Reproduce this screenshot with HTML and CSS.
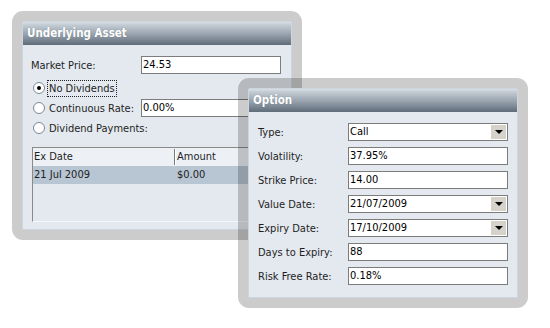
FILE: index.html
```html
<!DOCTYPE html>
<html>
<head>
<meta charset="utf-8">
<link rel="stylesheet" href="styles.css">
</head>
<body>
<div class="desk">
  <section class="frame frame-asset">
    <div class="panel panel-asset">
      <header class="panel-head">Underlying Asset</header>
      <div class="panel-body asset-body">
        <div class="row">
          <span class="lbl lbl-wide">Market Price:</span>
          <div class="field field-wide">24.53</div>
        </div>
        <div class="radio-row">
          <span class="radio checked"></span>
          <span class="focus">No Dividends</span>
        </div>
        <div class="radio-row">
          <span class="radio"></span>
          <span class="rlbl">Continuous Rate:</span>
          <div class="field field-wide">0.00%</div>
        </div>
        <div class="radio-row">
          <span class="radio"></span>
          <span class="rtext">Dividend Payments:</span>
        </div>
        <div class="grid">
          <div class="grid-head">
            <span class="col col-date">Ex Date</span>
            <span class="col col-amt">Amount</span>
          </div>
          <div class="grid-row selected">
            <span class="col col-date">21 Jul 2009</span>
            <span class="col col-amt">$0.00</span>
          </div>
        </div>
      </div>
    </div>
  </section>

  <section class="frame frame-option">
    <div class="panel panel-option">
      <header class="panel-head">Option</header>
      <div class="panel-body option-body">
        <div class="row"><span class="lbl">Type:</span><div class="field combo"><span class="val">Call</span><span class="drop"></span></div></div>
        <div class="row"><span class="lbl">Volatility:</span><div class="field">37.95%</div></div>
        <div class="row"><span class="lbl">Strike Price:</span><div class="field">14.00</div></div>
        <div class="row"><span class="lbl">Value Date:</span><div class="field combo"><span class="val">21/07/2009</span><span class="drop"></span></div></div>
        <div class="row"><span class="lbl">Expiry Date:</span><div class="field combo"><span class="val">17/10/2009</span><span class="drop"></span></div></div>
        <div class="row"><span class="lbl">Days to Expiry:</span><div class="field">88</div></div>
        <div class="row"><span class="lbl">Risk Free Rate:</span><div class="field">0.18%</div></div>
      </div>
    </div>
  </section>
</div>
</body>
</html>
```

FILE: styles.css
```css
* { box-sizing: border-box; }
html, body { margin: 0; padding: 0; background: #fff; }
body {
  font-family: "DejaVu Sans Condensed", "DejaVu Sans", sans-serif;
  font-stretch: semi-condensed;
  font-size: 11px;
  color: #1e1e1e;
}
.desk {
  position: relative;
  width: 550px;
  height: 328px;
  overflow: hidden;
  background: #fff;
}
.frame {
  position: absolute;
  padding: 10px;
  background: rgba(0, 0, 0, 0.2);
  border-radius: 11px;
}
.frame-asset { left: 12px; top: 11px; }
.frame-option { left: 238px; top: 78px; }

.panel {
  width: 270px;
  background: #e4e9ef;
  border: 1px solid #cdd6df;
  border-radius: 2px 2px 0 0;
  overflow: hidden;
}
.panel-asset { height: 209px; }
.panel-option { height: 210px; }

.panel-head {
  margin: -1px -1px 0;
  height: 24px;
  line-height: 24px;
  padding-left: 5px;
  font-family: "DejaVu Sans Condensed", "DejaVu Sans", sans-serif;
  font-weight: bold;
  font-size: 11.5px;
  color: #fff;
  text-shadow: 0 0 1px rgba(60, 70, 80, 0.4);
  background: linear-gradient(#dfe5ea 0%, #c5cdd5 15%, #98a3ae 55%, #5f6c79 100%);
  border-radius: 2px 2px 0 0;
}

.panel-body { display: flex; flex-direction: column; }
.asset-body { padding: 11px 10px 0 8px; }
.option-body { padding: 11px 9px 0 9px; gap: 6px; }

.row { display: flex; align-items: center; height: 18px; }
.lbl { width: 90px; flex: none; }
.lbl-wide { width: 110px; }

.field {
  width: 160px;
  height: 18px;
  flex: none;
  background: #fff;
  border: 1px solid #7c7c7c;
  color: #000;
  line-height: 16px;
  padding-left: 1px;
  white-space: nowrap;
  overflow: hidden;
}
.field-wide { width: 140px; }
.combo { display: flex; align-items: center; justify-content: space-between; }
.drop {
  width: 15px;
  height: 14px;
  margin-right: 1px;
  background: #d5d2cb;
  display: flex;
  align-items: center;
  justify-content: center;
}
.drop::after {
  content: "";
  border-left: 4px solid transparent;
  border-right: 4px solid transparent;
  border-top: 4px solid #000;
}

.radio-row { display: flex; align-items: center; height: 20px; }
.asset-body .row + .radio-row { margin-top: 4px; }
.radio {
  width: 12px;
  height: 12px;
  margin-left: 2px;
  margin-right: 3px;
  border-radius: 50%;
  border: 1px solid #7d8893;
  background: #fff;
  display: flex;
  align-items: center;
  justify-content: center;
  flex: none;
}
.radio.checked::after {
  content: "";
  width: 4px;
  height: 4px;
  border-radius: 50%;
  background: #000;
}
.focus {
  border: 1px dotted #222;
  padding: 1px;
  margin-left: -1px;
  line-height: 13px;
}
.rlbl { width: 93px; flex: none; padding-left: 1px; }
.rtext { padding-left: 1px; }

.grid {
  margin-top: 9px;
  margin-left: 1px;
  width: 251px;
  height: 75px;
  border-top: 1px solid #8a8a8a;
  border-left: 1px solid #8a8a8a;
  border-bottom: 1px solid #f4f6f8;
  background: #e4e9ef;
}
.grid-head, .grid-row { display: flex; height: 18px; line-height: 18px; }
.grid-head { background: #edf1f5; }
.grid-row.selected { background: #b8c5d2; }
.col { padding-left: 1px; }
.col-date { width: 142px; }
.grid-head .col-date { border-right: 1px solid #7a7a7a; box-shadow: 1px 0 0 #fff; height: 16px; margin-top: 1px; line-height: 16px; }
.grid-head .col-amt { padding-left: 2px; }
.grid-row .col-amt { padding-left: 2px; }
```
